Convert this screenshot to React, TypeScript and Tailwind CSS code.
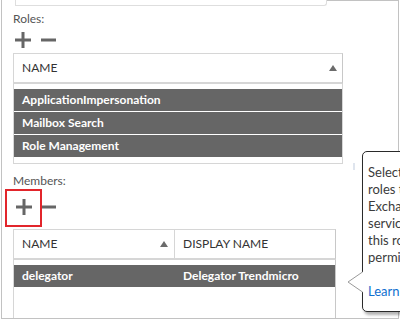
import React from "react";

const Plus = () => (
  <svg width="16" height="16" viewBox="0 0 16 16" className="block">
    <rect x="0" y="6.5" width="16" height="3" fill="#666" />
    <rect x="6.5" y="0" width="3" height="16" fill="#666" />
  </svg>
);

const Minus = () => (
  <svg width="15" height="16" viewBox="0 0 15 16" className="block">
    <rect x="0" y="6.5" width="15" height="3" fill="#666" />
  </svg>
);

const SortUp = () => (
  <svg width="8" height="6" viewBox="0 0 8 6" className="block">
    <polygon points="4,0 8,6 0,6" fill="#6b6b6b" />
  </svg>
);

export default function App() {
  const roles = ["ApplicationImpersonation", "Mailbox Search", "Role Management"];
  return (
    <div className="relative w-[400px] h-[320px] overflow-hidden bg-white font-['Lato','Open_Sans',sans-serif]">
      <div className="ml-px w-[398px] h-[319px] border-l border-r border-b border-[#c2c2c2] flex flex-col">
        {/* top row with clipped input */}
        <div className="flex h-[6px] shrink-0">
          <div className="ml-[13px] w-[312px] h-[6px] border-l border-r border-b border-[#dedede] rounded-br-[3px]" />
          <div className="flex-1 border-t border-[#c2c2c2]" />
        </div>
        <div className="pl-[11px] flex flex-col flex-1 min-h-0">
          {/* Roles */}
          <div className="mt-[5px] h-[16px] leading-[16px] text-[12px] text-[#555]">Roles:</div>
          <div className="mt-[5px] flex items-center h-[16px]">
            <div className="ml-[2px]"><Plus /></div>
            <div className="ml-[10px]"><Minus /></div>
          </div>
          <div className="mt-[5px] w-[330px] shrink-0">
            <div className="h-[31px] border-t border-l border-r border-b-2 border-[#d6d6d6] border-r-[#c8c8c8] flex items-center justify-between pl-[8px] pr-[5px]">
              <span className="text-[12px] leading-[16px] text-[#333]">NAME</span>
              <SortUp />
            </div>
            <div className="border-l border-r border-b border-[#d6d6d6] pt-[5px] pb-[6px] flex flex-col gap-px">
              {roles.map((r) => (
                <div key={r} className="h-[22px] bg-[#666666] flex items-center pl-[8px] text-white font-bold text-[12px] leading-[16px]">
                  {r}
                </div>
              ))}
            </div>
          </div>
          {/* Members */}
          <div className="mt-[9px] h-[16px] leading-[16px] text-[12px] text-[#555]">Members:</div>
          <div className="mt-[10px] flex items-center h-[16px]">
            <div className="relative ml-[3px]">
              <Plus />
              <div className="absolute left-[-11px] top-[-10px] w-[37px] h-[38px] border-2 border-[#e2252b]" />
            </div>
            <div className="ml-[9px]"><Minus /></div>
          </div>
          <div className="mt-[14px] w-[323px] flex flex-col flex-1 min-h-0">
            <div className="h-[31px] shrink-0 border-t border-l border-r border-b-2 border-[#d6d6d6] border-r-[#c8c8c8] flex">
              <div className="w-[161px] border-r border-[#d6d6d6] flex items-center justify-between pl-[8px] pr-[6px]">
                <span className="text-[12px] leading-[16px] text-[#333]">NAME</span>
                <SortUp />
              </div>
              <div className="flex-1 flex items-center pl-[8px]">
                <span className="text-[12px] leading-[16px] text-[#333]">DISPLAY NAME</span>
              </div>
            </div>
            <div className="flex-1 border-l border-r border-[#d6d6d6] border-r-[#c8c8c8] pt-[5px]">
              <div className="h-[22px] bg-[#666666] flex items-center text-white font-bold text-[12px] leading-[16px]">
                <div className="w-[161px] pl-[8px]">delegator</div>
                <div className="pl-[8px]">Delegator Trendmicro</div>
              </div>
            </div>
          </div>
        </div>
      </div>

      {/* faint mark */}
      <div className="absolute left-[353px] top-[163px] w-[2px] h-[7px] bg-[#dfe5ee]" />

      {/* callout */}
      <div className="absolute left-[362px] top-[151px] w-[70px] h-[161px] bg-white border border-[#2a2a2a] rounded-l-[5px] shadow-[2px_3px_3px_rgba(0,0,0,0.3)] overflow-hidden pl-[5px] pt-[12px] text-[13px] leading-[17px] text-[#3b3b3b] whitespace-nowrap">
        <div>Select the</div>
        <div>roles that you</div>
        <div>Exchange</div>
        <div>services to</div>
        <div>this role</div>
        <div>permissions.</div>
        <div>&nbsp;</div>
        <div className="text-[#0f6fcf]">Learn more</div>
      </div>
      <svg className="absolute left-[346px] top-[270px]" width="18" height="24" viewBox="0 0 18 24">
        <polygon points="2,12 16.5,2 17.5,2 17.5,22 16.5,22" fill="white" />
        <polyline points="16.5,2 2,12 16.5,22" fill="none" stroke="#9a9a9a" strokeWidth="1" />
      </svg>
    </div>
  );
}
